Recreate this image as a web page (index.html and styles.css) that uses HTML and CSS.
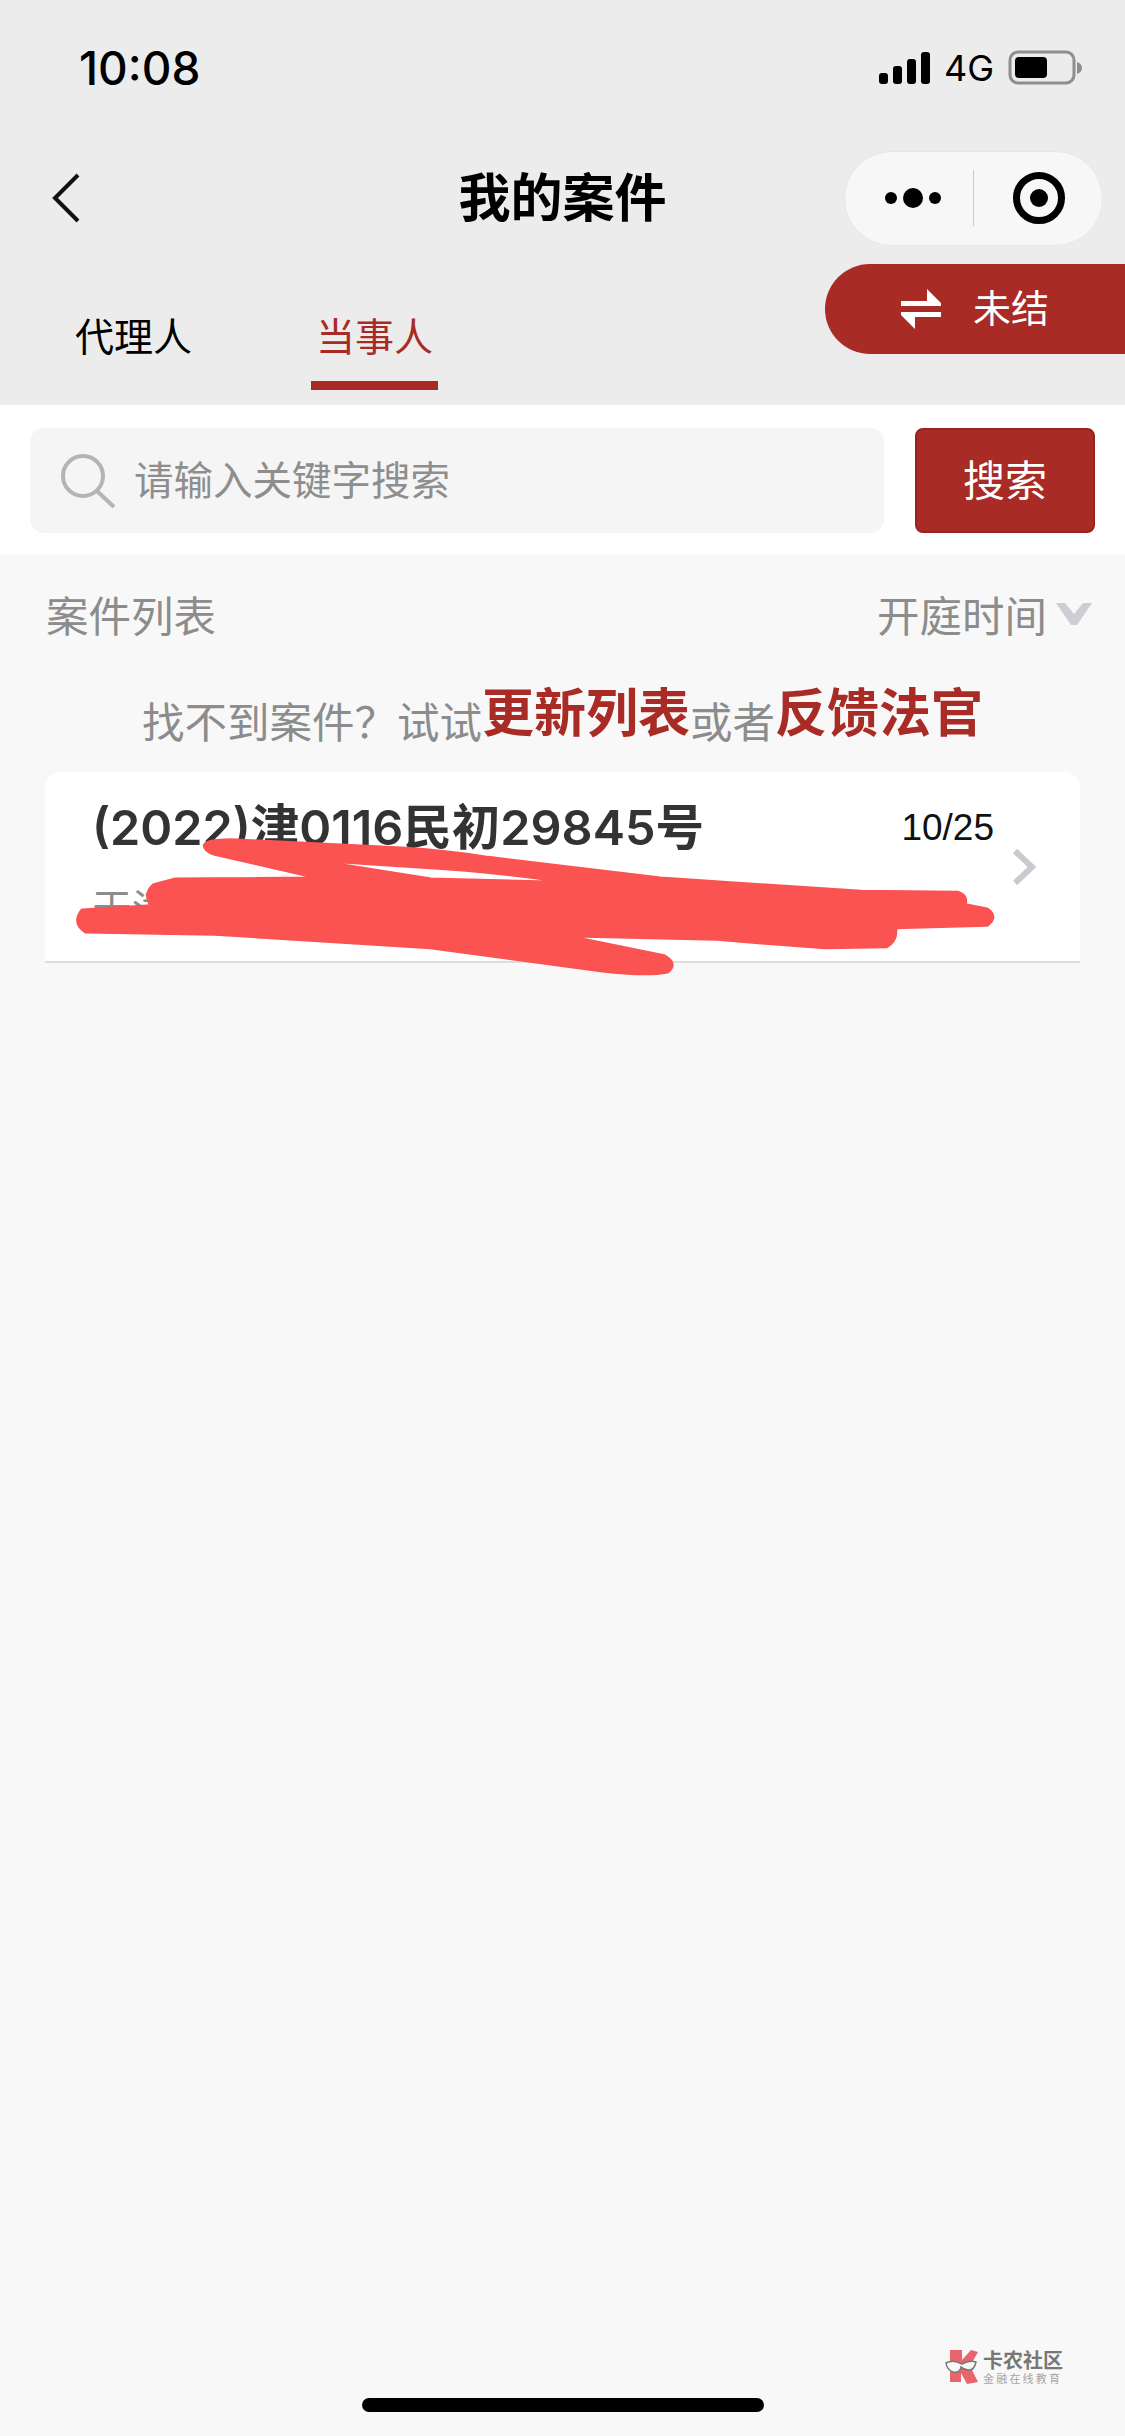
FILE: index.html
```html
<!DOCTYPE html>
<html lang="zh-CN">

<head>
    <meta charset="UTF-8">
    <meta name="viewport" content="width=device-width, initial-scale=1.0">
    <title>我的案件</title>
    <link rel="stylesheet" href="styles.css">
</head>

<body>
    <div class="page">
        <header class="top">
            <div class="status-bar">
                <span class="time">10:08</span>
                <div class="status-icons">
                    <svg class="signal" width="51" height="32" viewBox="0 0 51 32">
                        <rect x="0" y="21" width="9" height="11" rx="3" />
                        <rect x="14" y="14" width="9" height="18" rx="3" />
                        <rect x="28" y="7" width="9" height="25" rx="3" />
                        <rect x="42" y="0" width="9" height="32" rx="3" />
                    </svg>
                    <span class="net">4G</span>
                    <svg class="battery" width="74" height="36" viewBox="0 0 74 36">
                        <rect x="2" y="2" width="64" height="31" rx="8" fill="none" stroke="#8e8e8e" stroke-width="3" />
                        <rect x="7" y="7" width="32" height="21" rx="4" fill="#000" />
                        <path d="M69 12c3 1 5 3 5 6s-2 5-5 6z" fill="#8e8e8e" />
                    </svg>
                </div>
            </div>

            <nav class="nav">
                <div class="nav-left">
                    <svg class="back" width="30" height="52" viewBox="0 0 30 52">
                        <path d="M27 3 L4 26 L27 49" fill="none" stroke="#111" stroke-width="4" />
                    </svg>
                </div>
                <h1 class="nav-title">我的案件</h1>
                <div class="capsule">
                    <svg width="64" height="20" viewBox="0 0 64 20">
                        <circle cx="11" cy="10" r="6" />
                        <circle cx="33" cy="10" r="10" />
                        <circle cx="55" cy="10" r="6" />
                    </svg>
                    <span class="capsule-line"></span>
                    <svg width="54" height="54" viewBox="0 0 54 54">
                        <circle cx="27" cy="27" r="22.5" fill="none" stroke="#000" stroke-width="7" />
                        <circle cx="27" cy="27" r="9" />
                    </svg>
                </div>
            </nav>

            <div class="tabs-row">
                <div class="tab">代理人</div>
                <div class="tab tab-active">当事人</div>
                <div class="switch">
                    <svg width="40" height="40" viewBox="0 0 40 40">
                        <path d="M0 12 H26 V0 L40 14 V17 H0 Z" fill="#fff" />
                        <path d="M40 23 H0 V26 L14 40 V28 H40 Z" fill="#fff" />
                    </svg>
                    <span class="switch-text">未结</span>
                </div>
            </div>
        </header>

        <div class="search-bar">
            <div class="search-input">
                <svg width="56" height="56" viewBox="0 0 56 56">
                    <circle cx="23" cy="23" r="20" fill="none" stroke="#b4b4b4" stroke-width="4" />
                    <path d="M37 38 L54 54" fill="none" stroke="#b4b4b4" stroke-width="4" />
                </svg>
                <span class="placeholder">请输入关键字搜索</span>
            </div>
            <div class="search-btn">搜索</div>
        </div>

        <div class="list-head">
            <span>案件列表</span>
            <div class="sort">
                <span>开庭时间</span>
                <svg width="36" height="22" viewBox="0 0 36 22">
                    <path d="M0 0 H9 L18 11 L27 0 H36 L21 22 H15 Z" fill="#cdcdd3" />
                </svg>
            </div>
        </div>

        <p class="hint">找不到案件？试试<b>更新列表</b>或者<b>反馈法官</b></p>

        <div class="card">
            <div class="card-body">
                <div class="card-top">
                    <span class="case-no">(2022)津0116民初29845号</span>
                    <span class="case-date">10/25</span>
                </div>
                <div class="case-name">天津</div>
            </div>
            <svg class="card-arrow" width="24" height="36" viewBox="0 0 24 36">
                <path d="M3 2 L20 18 L3 34" fill="none" stroke="#c9c9cf" stroke-width="6" />
            </svg>
            <!-- red scribble drawn over the case details -->
            <svg class="scribble" width="1125" height="220" viewBox="0 0 1568 660" preserveAspectRatio="none">
                <path fill-rule="evenodd" stroke="#fb5252" stroke-width="5" stroke-linejoin="round" fill="#fb5252"
                    d="M285 255 Q290 235 330 238 L560 262 Q620 270 680 290 L920 352 L1200 392 L1335 395 Q1348 405 1345 432 L1375 445 Q1392 470 1375 498 L1248 505 Q1250 545 1235 562 L1150 565 Q1080 555 1000 540 L800 530 L925 585 Q945 610 930 638 Q900 650 840 635 L600 565 L300 525 L120 518 Q100 490 115 448 L210 435 Q200 400 215 372 L245 355 L435 352 L300 285 Q285 275 285 255 Z M455 305 L600 355 L780 365 Q680 335 600 325 Z" />
            </svg>
        </div>

        <div class="watermark">
            <svg width="36" height="36" viewBox="0 0 36 36">
                <path d="M5 1 H17 V11 L26 1 L33 3 L25 17 L33 33 L22 35 L16 24 V33 H5 Z" fill="#e9646c" />
                <path d="M1 14 Q8 10 17 15 Q24 11 31 13 Q29 22 23 21 Q18 20 16 18 Q15 24 8 23 Q2 21 1 14 Z" fill="#f8f8f8" stroke="#777" stroke-width="1.5" />
            </svg>
            <div class="watermark-text">
                <span class="watermark-name">卡农社区</span>
                <span class="watermark-sub">金融在线教育</span>
            </div>
        </div>

        <div class="home-bar"></div>
    </div>
</body>

</html>
```

FILE: styles.css
```css
* {
    box-sizing: border-box;
}

body {
    margin: 0;
    padding: 0;
    background-color: #f8f8f8;
    font-family: "Liberation Sans", "Noto Sans CJK SC", sans-serif;
}

.page {
    position: relative;
    width: 1125px;
    height: 2436px;
    overflow: hidden;
    display: flex;
    flex-direction: column;
}

/* top grey area */
.top {
    height: 405px;
    background-color: #ececec;
}

.status-bar {
    height: 150px;
    padding: 44px 43px 0 79px;
    display: flex;
    justify-content: space-between;
    align-items: flex-start;
}

.time {
    font-family: Inter, "Liberation Sans", sans-serif;
    font-size: 46px;
    font-weight: 500;
    line-height: 48px;
    color: #000;
}

.status-icons {
    display: flex;
    align-items: center;
    gap: 14px;
    height: 48px;
}

.net {
    font-size: 36px;
    color: #000;
    font-family: Inter, "Liberation Sans", sans-serif;
}

.nav {
    height: 96px;
    padding-right: 22px;
    display: grid;
    grid-template-columns: 259px 1fr 259px;
    align-items: center;
}

.nav-left {
    padding-left: 51px;
    display: flex;
    align-items: center;
}

.nav-title {
    margin: 0 0 6px;
    padding-left: 22px;
    text-align: center;
    font-family: "Noto Sans CJK SC", sans-serif;
    font-size: 52px;
    font-weight: 700;
    line-height: 60px;
    color: #000;
}

.capsule {
    width: 259px;
    height: 95px;
    padding-left: 35px;
    border: 1px solid #e6e6e6;
    border-radius: 48px;
    background-color: #f7f7f7;
    display: flex;
    align-items: center;
}

.capsule-line {
    width: 1px;
    height: 56px;
    margin: 0 38px 0 29px;
    background-color: #c8c8c8;
}

.tabs-row {
    height: 159px;
    margin-top: 18px;
    padding-left: 70px;
    display: flex;
    align-items: flex-start;
    gap: 114px;
    font-family: "Noto Sans CJK SC", sans-serif;
}

.tab {
    margin-top: 42px;
    padding: 0 5px 19px;
    border-bottom: 9px solid transparent;
    font-size: 39px;
    line-height: 56px;
    color: #000;
}

.tab-active {
    color: #a92b25;
    border-bottom-color: #a92b25;
}

.switch {
    width: 300px;
    height: 90px;
    margin-left: auto;
    padding-left: 76px;
    border-radius: 45px 0 0 45px;
    background-color: #a92b25;
    color: #fff;
    font-size: 38px;
    display: flex;
    align-items: center;
    gap: 32px;
}

.switch-text {
    padding-bottom: 8px;
}

/* search */
.search-bar {
    height: 150px;
    padding: 23px 30px 22px;
    background-color: #fff;
    display: flex;
    gap: 31px;
    font-family: "Noto Sans CJK SC", sans-serif;
}

.search-input {
    flex: 1;
    padding-left: 30px;
    border-radius: 14px;
    background-color: #f5f5f5;
    color: #8e8e8e;
    font-size: 39.5px;
    display: flex;
    align-items: center;
    gap: 18px;
}

.placeholder {
    padding-bottom: 6px;
}

.search-btn {
    width: 180px;
    padding-bottom: 6px;
    border: 2px solid #96231e;
    border-radius: 8px;
    background-color: #a92b25;
    color: #fff;
    font-size: 42px;
    display: flex;
    justify-content: center;
    align-items: center;
}

/* list */
.list-head {
    height: 90px;
    padding: 29px 33px 1px 46px;
    display: flex;
    justify-content: space-between;
    align-items: center;
    color: #8c8c8c;
    font-family: "Noto Sans CJK SC", sans-serif;
    font-size: 42.5px;
    line-height: 60px;
}

.sort {
    display: flex;
    align-items: center;
    gap: 9px;
}

.hint {
    height: 70px;
    margin: 35px 0 0;
    text-align: center;
    color: #8c8c8c;
    font-family: "Noto Sans CJK SC", sans-serif;
    font-size: 42.5px;
    line-height: 72px;
}

.hint b {
    position: relative;
    top: -6px;
    color: #a92b25;
    font-size: 52px;
    font-weight: 700;
}

.card {
    position: relative;
    height: 191px;
    margin: 22px 45px 0;
    border-bottom: 2px solid #dedede;
    border-radius: 16px 16px 0 0;
    background-color: #fff;
    display: flex;
    align-items: center;
}

.card-body {
    flex: 1;
    padding-left: 47px;
}

.card-top {
    display: flex;
    justify-content: space-between;
    align-items: center;
}

.case-no {
    font-family: Inter, "Noto Sans CJK SC", sans-serif;
    font-size: 48.5px;
    font-weight: 600;
    line-height: 56px;
    color: #333;
}

.case-date {
    font-size: 37px;
    color: #111;
}

.case-name {
    margin-top: 22px;
    font-family: "Noto Sans CJK SC", sans-serif;
    font-size: 40px;
    line-height: 56px;
    color: #8c8c8c;
}

.card-arrow {
    margin: 0 44px 0 18px;
}

.scribble {
    position: absolute;
    left: -45px;
    top: -12px;
}

/* site watermark over the page corner */
.watermark {
    position: absolute;
    left: 945px;
    top: 2349px;
    display: flex;
    align-items: center;
    gap: 2px;
}

.watermark-text {
    display: flex;
    flex-direction: column;
    font-family: "Noto Sans CJK SC", sans-serif;
}

.watermark-name {
    font-size: 20px;
    font-weight: 700;
    line-height: 22px;
    color: #777;
}

.watermark-sub {
    font-size: 11px;
    line-height: 14px;
    letter-spacing: 2.2px;
    color: #a5a5a5;
}

.home-bar {
    width: 402px;
    height: 14px;
    margin: auto auto 24px;
    border-radius: 7px;
    background-color: #000;
}
```
